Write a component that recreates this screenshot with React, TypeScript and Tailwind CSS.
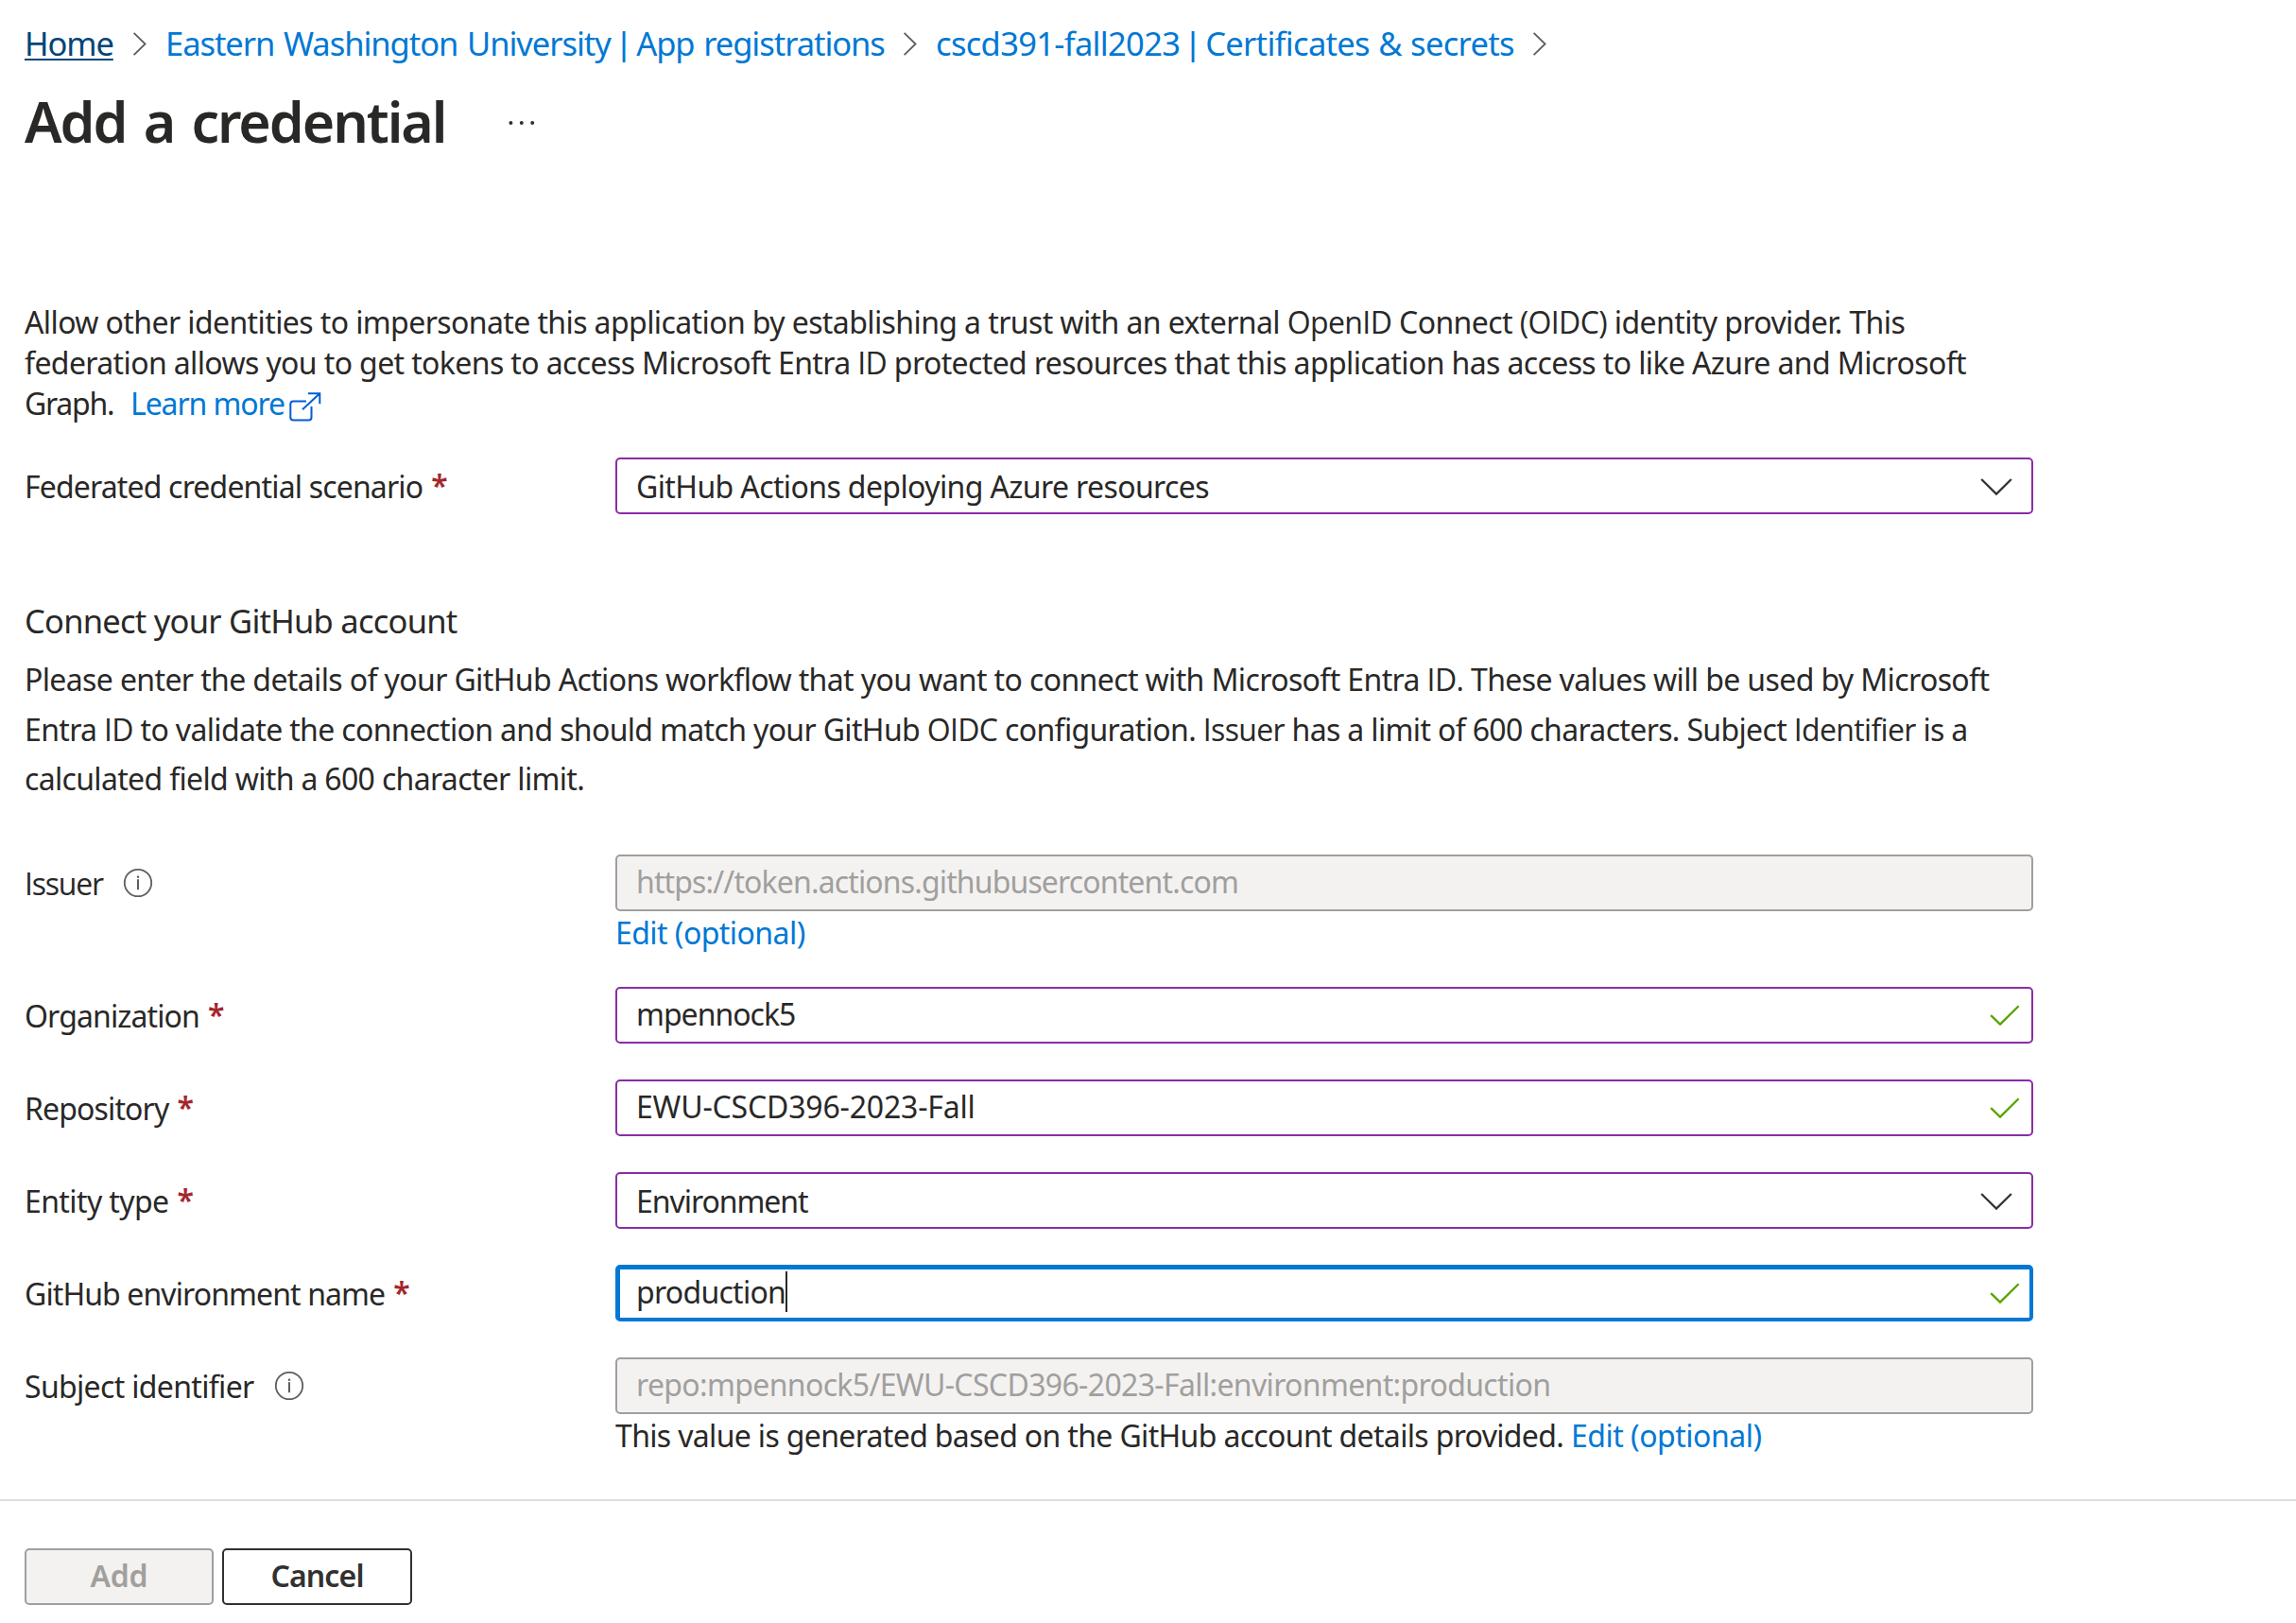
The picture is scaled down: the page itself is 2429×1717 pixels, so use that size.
import React from "react";

/* Words holding a capital "I" use Open Sans, whose "I" has no serifs; the bar takes a narrower face. */
function Txt({ children, className = "" }: { children: string; className?: string }) {
  const parts = children.split(/(\S*I\S*|\|)/);
  return (
    <span className={`whitespace-pre ${className}`}>
      {parts.map((p, i) =>
        i % 2 ? (
          <span
            key={i}
            className={p === "|" ? "font-['Liberation_Sans',sans-serif]" : "font-['Open_Sans',sans-serif]"}
          >
            {p}
          </span>
        ) : (
          p
        ),
      )}
    </span>
  );
}

function Crumb() {
  return (
    <svg className="h-[27px] w-4 shrink-0" viewBox="0 0 16 27" fill="none" stroke="#605e5c" strokeWidth="1.8">
      <path d="M1.6 1.8 13.6 13.5 1.6 25.2" />
    </svg>
  );
}

function ChevronDown() {
  return (
    <svg className="mt-[2px] h-5 w-[34px] shrink-0" viewBox="0 0 34 20" fill="none" stroke="#323130" strokeWidth="2.2">
      <path d="M1.2 2 17 17.6 32.8 2" />
    </svg>
  );
}

function Check() {
  return (
    <svg className="mt-[2px] h-6 w-8 shrink-0" viewBox="0 0 32 24" fill="none" stroke="#57a300" strokeWidth="2.3">
      <path d="M1.2 12.2 11 21.6 30.6 2.2" />
    </svg>
  );
}

function Info() {
  return (
    <svg className="h-8 w-8 shrink-0" viewBox="0 0 32 32" fill="none">
      <circle cx="16" cy="16" r="14.2" stroke="#605e5c" strokeWidth="1.8" />
      <rect x="15" y="12.2" width="2" height="11" fill="#605e5c" />
      <rect x="14.9" y="8.6" width="2.2" height="2.2" fill="#605e5c" />
    </svg>
  );
}

function ExternalLink() {
  return (
    <svg className="mt-[9px] h-[34px] w-9 shrink-0" viewBox="0 0 36 34" fill="none" stroke="#015cda" strokeWidth="2">
      <path d="M19 10.4H5.3a3 3 0 0 0-3 3v14a3 3 0 0 0 3 3h16.2a3 3 0 0 0 3-3V16" />
      <path d="M21 2.2h12.3v11M15 19.2 33 2.4" />
    </svg>
  );
}

function Label({
  text,
  track,
  required,
  info,
}: {
  text: string;
  track: string;
  required?: boolean;
  info?: boolean;
}) {
  return (
    <div className="flex h-[60px] w-[651px] shrink-0 items-center pl-[26px]">
      <Txt className={`pt-[2px] leading-[60px] ${track}`}>{text}</Txt>
      {required && <span className="ml-[9px] font-semibold leading-[60px] text-[#a4262c]">*</span>}
      {info && (
        <span className="ml-[21px]">
          <Info />
        </span>
      )}
    </div>
  );
}

const boxBase = "flex h-[60px] w-[1500px] shrink-0 items-center rounded-[5px]";

export default function App() {
  return (
    <div className="flex h-[1717px] w-[2429px] flex-col overflow-hidden bg-white font-['Noto_Sans',sans-serif] text-[32px] text-[#292827]">
      <nav className="mt-[22px] flex h-12 shrink-0 items-center pl-[26px] text-[34.5px] leading-[48px] text-[#0078d4]">
        <span className="w-[114px]">
          <a className="tracking-[-1.1px] text-[#004578] underline decoration-2 underline-offset-[3px]">Home</a>
        </span>
        <Crumb />
        <Txt className="ml-[19px] w-[780px] tracking-[-1.04px] [word-spacing:1.8px]">
          Eastern Washington University | App registrations
        </Txt>
        <Crumb />
        <Txt className="ml-[19px] w-[631px] tracking-[-0.68px] [word-spacing:1px]">
          cscd391-fall2023 | Certificates &amp; secrets
        </Txt>
        <Crumb />
      </nav>

      <header className="mt-[18px] flex h-20 shrink-0 items-center pl-[26px]">
        <h1 className="w-[511px] whitespace-nowrap text-[59px] font-semibold leading-[80px] tracking-[-2.05px] [word-spacing:5px]">
          Add a credential
        </h1>
        <svg className="mt-[3px] h-2 w-8" viewBox="0 0 32 8" fill="#323130">
          <circle cx="3.4" cy="4" r="2" />
          <circle cx="14.8" cy="4" r="2" />
          <circle cx="26.2" cy="4" r="2" />
        </svg>
      </header>

      <p className="mt-[151px] flex shrink-0 flex-col pl-[26px] leading-[43px]">
        <Txt className="tracking-[-0.6px]">
          Allow other identities to impersonate this application by establishing a trust with an external OpenID Connect (OIDC) identity provider. This
        </Txt>
        <Txt className="tracking-[-0.62px]">
          federation allows you to get tokens to access Microsoft Entra ID protected resources that this application has access to like Azure and Microsoft
        </Txt>
        <span className="flex h-[43px]">
          <Txt className="w-[112px] tracking-[-1.25px]">Graph.</Txt>
          <Txt className="w-[167px] tracking-[-1.1px] text-[#0078d4]">Learn more</Txt>
          <ExternalLink />
        </span>
      </p>

      <div className="mt-9 flex shrink-0">
        <Label text="Federated credential scenario" track="tracking-[-0.84px]" required />
        <div className={`${boxBase} justify-between border-2 border-[#8a2da5] pl-5 pr-5`}>
          <Txt className="pt-[2px] tracking-[-0.61px]">GitHub Actions deploying Azure resources</Txt>
          <ChevronDown />
        </div>
      </div>

      <h2 className="mt-[89px] h-12 shrink-0 pl-[26px] text-[34.5px] leading-[48px] tracking-[-0.75px]">
        Connect your GitHub account
      </h2>
      <p className="mt-3 flex h-[157px] shrink-0 flex-col pl-[26px] leading-[52.5px]">
        <Txt className="tracking-[-0.625px]">
          Please enter the details of your GitHub Actions workflow that you want to connect with Microsoft Entra ID. These values will be used by Microsoft
        </Txt>
        <Txt className="tracking-[-0.655px]">
          Entra ID to validate the connection and should match your GitHub OIDC configuration. Issuer has a limit of 600 characters. Subject Identifier is a
        </Txt>
        <Txt className="tracking-[-0.67px]">calculated field with a 600 character limit.</Txt>
      </p>

      <div className="mt-[54px] flex shrink-0">
        <Label text="Issuer" track="tracking-[-1.2px]" info />
        <div className="flex flex-col">
          <div className={`${boxBase} border-2 border-[#a19f9d] bg-[#f3f2f1] pb-[3px] pl-5 text-[#a19f9d]`}>
            <Txt className="tracking-[-0.86px]">https://token.actions.githubusercontent.com</Txt>
          </div>
          <Txt className="h-11 pt-px leading-[44px] tracking-[-0.55px] text-[#0078d4]">Edit (optional)</Txt>
        </div>
      </div>

      <div className="mt-9 flex shrink-0 flex-col gap-[38px]">
        <div className="flex">
          <Label text="Organization" track="tracking-[-0.88px]" required />
          <div className={`${boxBase} justify-between border-2 border-[#8a2da5] pb-[3px] pl-5 pr-3`}>
            <Txt className="tracking-[-1px]">mpennock5</Txt>
            <Check />
          </div>
        </div>
        <div className="flex">
          <Label text="Repository" track="tracking-[-0.86px]" required />
          <div className={`${boxBase} justify-between border-2 border-[#8a2da5] pb-[3px] pl-5 pr-3`}>
            <Txt className="tracking-[-0.18px]">EWU-CSCD396-2023-Fall</Txt>
            <Check />
          </div>
        </div>
        <div className="flex">
          <Label text="Entity type" track="tracking-[-0.6px]" required />
          <div className={`${boxBase} justify-between border-2 border-[#8a2da5] pl-5 pr-5`}>
            <Txt className="pt-[2px] tracking-[-1.05px]">Environment</Txt>
            <ChevronDown />
          </div>
        </div>
        <div className="flex">
          <Label text="GitHub environment name" track="tracking-[-0.9px]" required />
          <div
            className={`${boxBase} border-t-5 border-r-4 border-b-4 border-l-5 border-[#0078d4] pb-1 pl-[17px] pr-[10px]`}
          >
            <Txt className="tracking-[-0.72px]">production</Txt>
            <span className="h-[43px] w-[2px] bg-[#292827]" />
            <span className="ml-auto">
              <Check />
            </span>
          </div>
        </div>
        <div className="flex">
          <Label text="Subject identifier" track="tracking-[-0.67px]" info />
          <div className="flex flex-col">
            <div className={`${boxBase} border-2 border-[#a19f9d] bg-[#f3f2f1] pb-[3px] pl-5 text-[#a19f9d]`}>
              <Txt className="tracking-[-0.65px]">repo:mpennock5/EWU-CSCD396-2023-Fall:environment:production</Txt>
            </div>
            <div className="flex h-11 pt-px leading-[44px]">
              <Txt className="w-[1011px] tracking-[-0.66px]">
                This value is generated based on the GitHub account details provided.
              </Txt>
              <Txt className="tracking-[-0.5px] text-[#0078d4]">Edit (optional)</Txt>
            </div>
          </div>
        </div>
      </div>

      <div className="mt-[46px] h-[2px] shrink-0 bg-[#dddddd]" />

      <footer className="mt-[50px] flex shrink-0 gap-[9px] pl-[26px] font-semibold">
        <button className="h-[60px] w-[200px] rounded-[5px] border-2 border-[#a19f9d] bg-[#f3f2f1] pb-[3px] tracking-[-0.27px] text-[#a19f9d]">
          Add
        </button>
        <button className="h-[60px] w-[201px] rounded-[5px] border-2 border-[#323130] bg-white pb-[3px] tracking-[-0.87px] text-[#323130]">
          Cancel
        </button>
      </footer>
    </div>
  );
}
